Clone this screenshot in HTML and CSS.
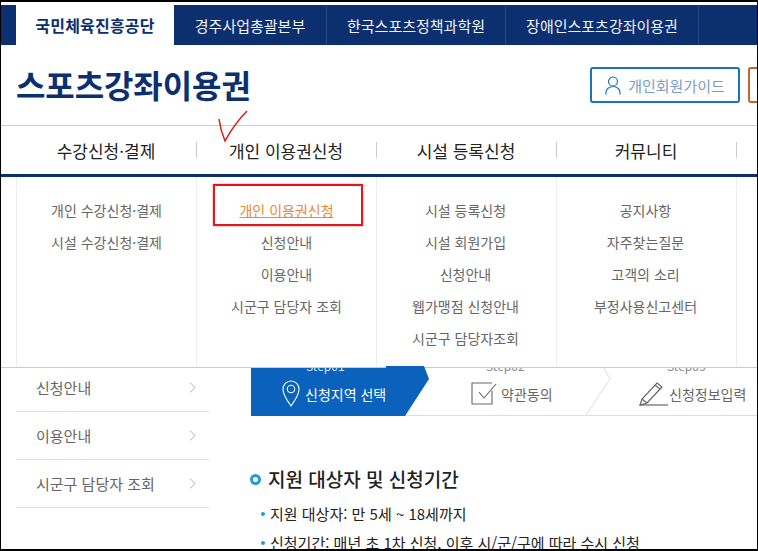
FILE: index.html
```html
<!DOCTYPE html>
<html lang="ko">
<head>
<meta charset="utf-8">
<title>스포츠강좌이용권</title>
<link rel="stylesheet" href="styles.css">
</head>
<body>
<div class="frame">
  <nav class="topbar">
    <a class="tab tab-active">국민체육진흥공단</a>
    <a class="tab tab-2">경주사업총괄본부</a>
    <a class="tab tab-3">한국스포츠정책과학원</a>
    <a class="tab tab-4">장애인스포츠강좌이용권</a>
  </nav>
  <header class="header">
    <h1 class="logo">스포츠강좌이용권</h1>
    <div class="header-actions">
      <a class="guide-btn">
        <svg class="guide-icon" width="16" height="19" viewBox="0 0 16 19" fill="none" stroke="#1a74b8" stroke-width="1.2"><ellipse cx="8" cy="5.5" rx="4.5" ry="4.5"/><path d="M1 18.5v-2c0-3.5 3-6 7-6s7 2.500 7 6v2"/></svg>
        개인회원가이드
      </a>
      <span class="orange-btn"></span>
    </div>
  </header>
  <nav class="gnb">
    <div class="gnb-item">수강신청·결제</div>
    <div class="gnb-item">개인 이용권신청</div>
    <div class="gnb-item">시설 등록신청</div>
    <div class="gnb-item">커뮤니티</div>
  </nav>
  <div class="body">
    <aside class="side">
      <a class="side-item">신청안내<svg class="chev" width="7" height="11" viewBox="0 0 7 11" fill="none" stroke="#aaa"><path d="M1 .5l5 5-5 5"/></svg></a>
      <a class="side-item">이용안내<svg class="chev" width="7" height="11" viewBox="0 0 7 11" fill="none" stroke="#aaa"><path d="M1 .5l5 5-5 5"/></svg></a>
      <a class="side-item">시군구 담당자 조회<svg class="chev" width="7" height="11" viewBox="0 0 7 11" fill="none" stroke="#aaa"><path d="M1 .5l5 5-5 5"/></svg></a>
    </aside>
    <main class="main">
      <div class="steps">
        <div class="step step-on">
          <span class="step-no">Step01</span>
          <div class="step-row">
            <svg width="18" height="27" viewBox="0 0 18 27" fill="none" stroke="#fff" stroke-width="1.100"><path d="M9 26C5 20 1 15.500 1 9a8 8 0 0 1 16 0c0 6.500-4 11-8 17z"/><circle cx="9" cy="9" r="3.700"/></svg>
            신청지역 선택
          </div>
        </div>
        <div class="step step-2">
          <span class="step-no">Step02</span>
          <div class="step-row">
            <svg width="26" height="23" viewBox="0 0 26 23" fill="none" stroke="#666" stroke-width="1.100"><path d="M21 8.500V22H1V1h20"/><path d="M8 10l5 6 12-14"/></svg>
            약관동의
          </div>
        </div>
        <div class="step step-3">
          <span class="step-no">Step03</span>
          <div class="step-row">
            <svg width="29" height="25" viewBox="0 0 29 25" fill="none" stroke="#666" stroke-width="1.200"><path d="M1 24l2-6L18 2l5 4L8 22z"/><path d="M3 18l5 4M16 4l5 4"/><path d="M1 24h28"/></svg>
            신청정보입력
          </div>
        </div>
        <svg class="step-sep" width="26" height="49" viewBox="0 0 26 49" fill="none" stroke="#ddd"><path d="M0 49L24 13 17 0"/></svg>
        <svg class="step-arrow" width="44" height="50" viewBox="0 0 44 50"><path d="M0 0h38l5 13-24 37H0z" fill="#0a62bd"/></svg>
      </div>
      <section class="info">
        <h2 class="info-title"><span class="ring"></span>지원 대상자 및 신청기간</h2>
        <ul class="info-list">
          <li>지원 대상자: 만 5세 ~ 18세까지</li>
          <li>신청기간: 매년 초 1차 신청, 이후 시/군/구에 따라 수시 신청</li>
        </ul>
      </section>
    </main>
  </div>
  <div class="dropdown">
    <ul class="drop-col">
      <li>개인 수강신청·결제</li>
      <li>시설 수강신청·결제</li>
    </ul>
    <ul class="drop-col">
      <li class="drop-current">개인 이용권신청</li>
      <li>신청안내</li>
      <li>이용안내</li>
      <li>시군구 담당자 조회</li>
    </ul>
    <ul class="drop-col drop-nudge">
      <li>시설 등록신청</li>
      <li>시설 회원가입</li>
      <li>신청안내</li>
      <li>웹가맹점 신청안내</li>
      <li>시군구 담당자조회</li>
    </ul>
    <ul class="drop-col drop-nudge">
      <li>공지사항</li>
      <li>자주찾는질문</li>
      <li>고객의 소리</li>
      <li>부정사용신고센터</li>
    </ul>
    <div class="drop-col drop-end"></div>
  </div>
  <span class="red-box"></span>
  <svg class="red-check" width="30" height="34" viewBox="0 0 30 34" fill="none" stroke="#e01818" stroke-width="1.500"><path d="M1 9c1 8 3 15 6 22C13 20 20 10 29 1"/></svg>
</div>
</body>
</html>
```

FILE: styles.css
```css
* { box-sizing: border-box; }
html, body { margin: 0; padding: 0; background: #fff; }
body { font-family: "Noto Sans CJK KR", "Noto Sans", sans-serif; }
ul { list-style: none; margin: 0; padding: 0; }

.frame {
  position: relative;
  width: 758px;
  height: 551px;
  overflow: hidden;
  border: 1px solid #000;
  border-width: 2px 1px 2px 1px;
  padding-top: 3px;
}

.topbar {
  display: flex;
  height: 40px;
  background: #0b2f6f;
  padding-left: 15px;
}
.tab {
  display: flex;
  flex: none;
  align-items: center;
  justify-content: center;
  color: #f0f3f8;
  font-size: 15px;
  border-right: 1px solid #2a4a84;
}
.tab-active { width: 158px; background: #fff; color: #0b2f6f; font-size: 16px; font-weight: 700; letter-spacing: .2px; border-right: 0; }
.tab-2 { width: 153px; }
.tab-3 { width: 179px; }
.tab-4 { width: 193px; }

.header {
  display: flex;
  align-items: center;
  justify-content: space-between;
  height: 81px;
  padding-left: 15px;
  border-bottom: 1px solid #ccc;
}
.logo {
  margin: 0 0 2px;
  font-size: 32px;
  font-weight: 700;
  color: #0b2f6f;
  letter-spacing: -0.1px;
  line-height: 44px;
}
.header-actions { display: flex; gap: 8px; align-items: center; margin-right: -41px; }
.guide-btn {
  display: flex;
  align-items: center;
  justify-content: center;
  gap: 7px;
  width: 150px;
  height: 36px;
  border: 2px solid #1a74b8;
  border-radius: 3px;
  font-size: 15px;
  color: #7b9cc6;
}
.orange-btn { width: 50px; height: 36px; border: 2px solid #c8642a; border-radius: 3px; }

.gnb {
  display: flex;
  height: 51px;
  border-bottom: 3px solid #0b2f6f;
  padding-left: 15px;
  padding-top: 16px;
  overflow: hidden;
}
.gnb-item {
  position: relative;
  flex: none;
  width: 180px;
  height: 16px;
  display: flex;
  align-items: center;
  justify-content: center;
  font-size: 17px;
  color: #222;
}
.gnb-item::after {
  content: "";
  position: absolute;
  right: -1px;
  top: 0;
  width: 1px;
  height: 16px;
  background: #ccc;
}

.body { display: flex; padding-top: 189px; }
.side { width: 193px; margin-left: 15px; margin-top: -2px; }
.side-item {
  display: flex;
  align-items: center;
  justify-content: space-between;
  height: 48px;
  padding: 0 13px 0 20px;
  border-bottom: 1px solid #ddd;
  font-size: 15px;
  color: #666;
}
.main { margin-left: 42px; flex: 1; min-width: 0; }

.steps {
  position: relative;
  display: flex;
  height: 50px;
  border-bottom: 1px solid #ddd;
}
.step { position: relative; height: 49px; font-size: 14px; color: #666; }
.step-on { width: 154px; height: 50px; background: #0a62bd; color: #fff; }
.step-2 { width: 181px; }
.step-3 { flex: 1; }
.step-no {
  position: absolute;
  top: -7px;
  font-size: 12px;
  line-height: 14px;
  color: #888;
}
.step-on .step-no { left: 55px; color: #d5e4f5; }
.step-2 .step-no { left: 81px; }
.step-3 .step-no { left: 81px; }
.step-row { display: flex; align-items: center; height: 49px; padding-top: 6px; gap: 5px; white-space: nowrap; }
.step-on .step-row { padding-left: 31px; position: relative; z-index: 2; }
.step-2 .step-row { padding-left: 66px; gap: 4px; }
.step-3 .step-row { padding-left: 53px; gap: 1px; }
.step-arrow { position: absolute; left: 135px; top: 0; z-index: 1; }
.step-sep { position: absolute; left: 335px; top: 0; }

.info { padding-top: 50px; color: #222; }
.info-title {
  display: flex;
  align-items: center;
  margin: 0;
  font-size: 19px;
  font-weight: 500;
  line-height: 26px;
}
.ring {
  width: 11px;
  height: 11px;
  border: 3px solid #1e9fd6;
  border-radius: 50%;
  margin-right: 7px;
  margin-left: -1px;
}
.info-list { margin-top: 12px; padding-left: 10px; font-size: 15px; }
.info-list li { position: relative; padding-left: 9px; line-height: 20px; margin-bottom: 9px; white-space: nowrap; }
.info-list li::before {
  content: "";
  position: absolute;
  left: 0;
  top: 8px;
  width: 4px;
  height: 4px;
  border-radius: 50%;
  background: #1e9fd6;
}

.dropdown {
  position: absolute;
  left: 15px;
  right: -1px;
  top: 175px;
  height: 191px;
  display: flex;
  background: #fff;
  font-size: 14px;
  color: #666;
  box-shadow: -15px 0 0 #fff;
}
.dropdown::after {
  content: "";
  position: absolute;
  left: -15px;
  right: 0;
  bottom: 0;
  height: 1px;
  background: #ccc;
}
.drop-col {
  flex: none;
  width: 180px;
  padding-top: 17px;
  border-left: 1px solid #eee;
  text-align: center;
}
.drop-nudge { padding-right: 2px; }
.drop-col li { height: 32px; line-height: 32px; }
.drop-current { color: #e58a3c; text-decoration: underline; }
.drop-end { flex: 1; }

.red-box {
  position: absolute;
  left: 212px;
  top: 182px;
  width: 150px;
  height: 42px;
  border: 2px solid #e8141c;
  box-shadow: 0 0 2px rgba(232, 20, 28, .5);
}
.red-check { position: absolute; left: 217px; top: 108px; }
```
